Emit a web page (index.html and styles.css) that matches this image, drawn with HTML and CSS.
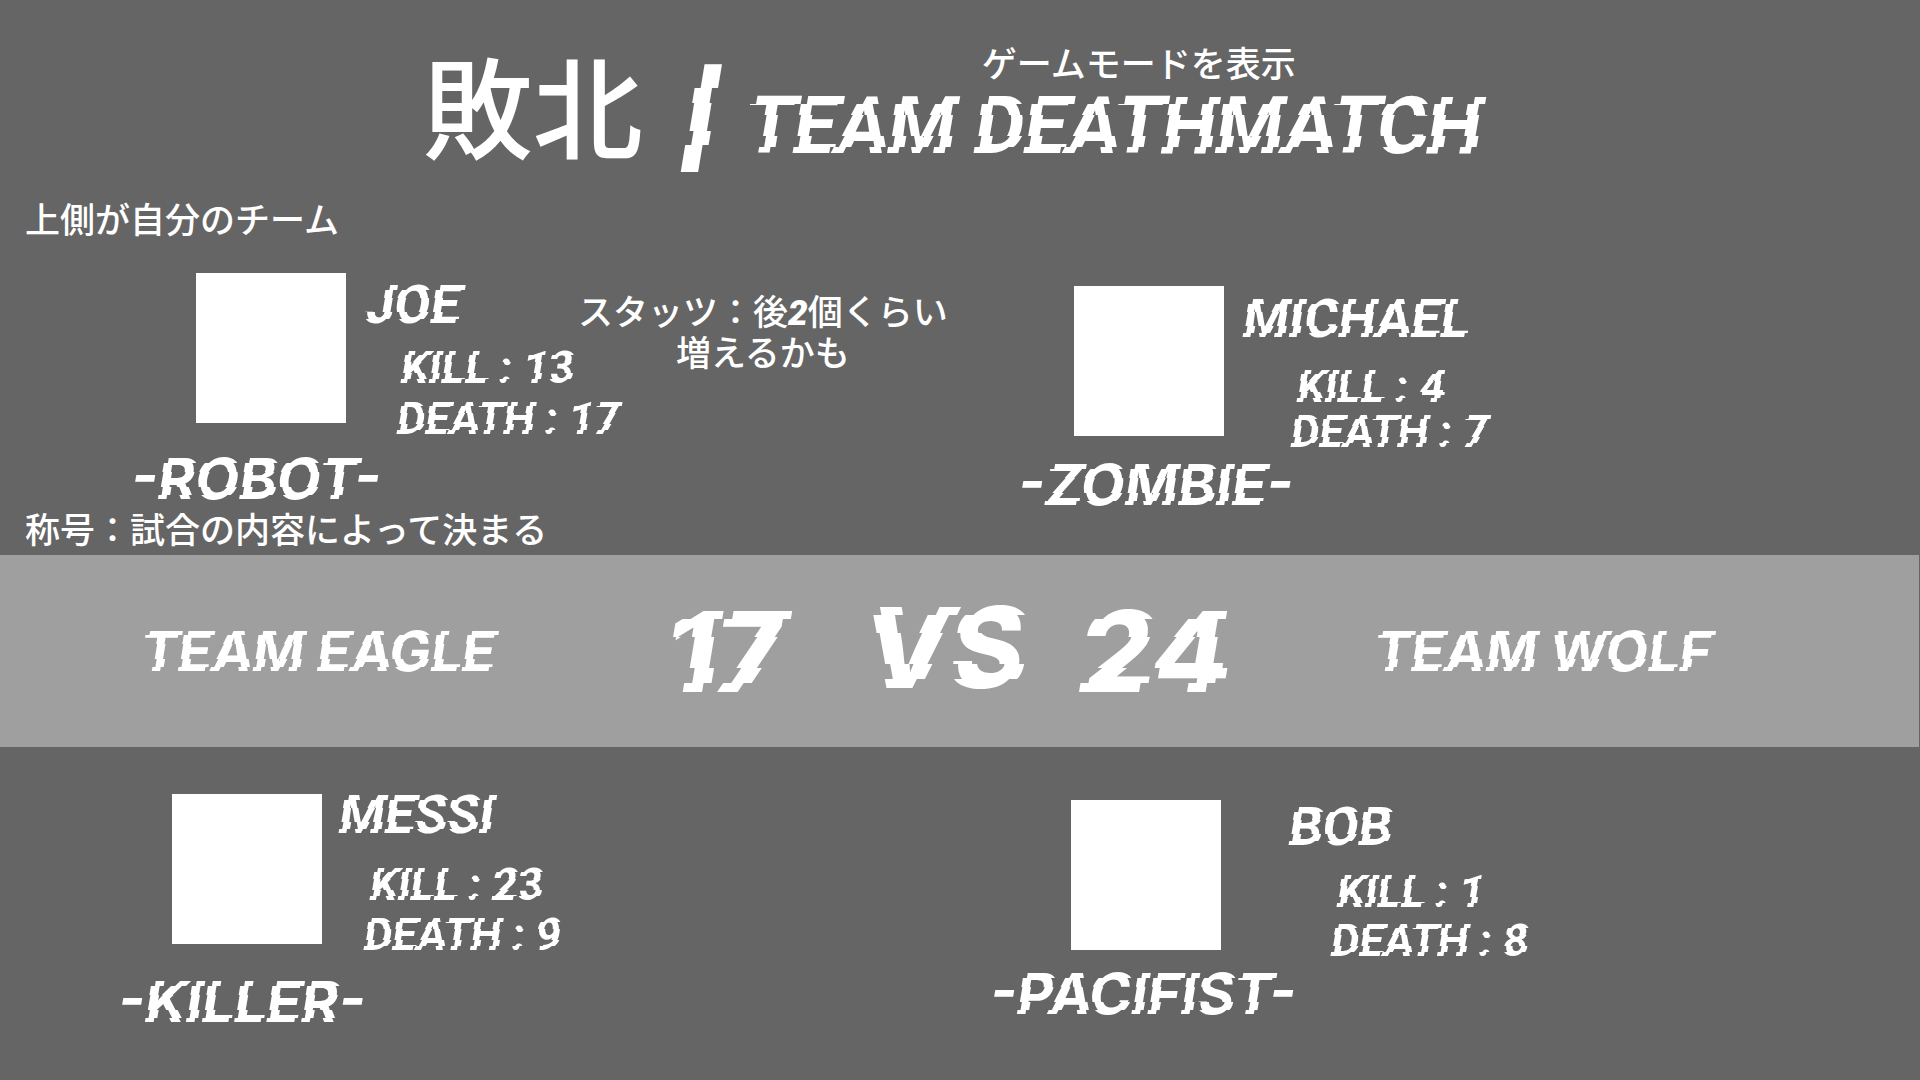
FILE: index.html
```html
<!DOCTYPE html>
<html lang="ja">
<head>
<meta charset="utf-8">
<title>Team Deathmatch</title>
<link rel="stylesheet" href="styles.css">
</head>
<body>
<svg class="defs" width="0" height="0" aria-hidden="true">
  <defs>
    <!-- Each filter cuts the text into five bands and shifts them sideways; one per text size. -->
    <filter id="glitch-title" filterUnits="userSpaceOnUse" primitiveUnits="userSpaceOnUse" x="-20" y="-20" width="1000" height="140" color-interpolation-filters="sRGB">
      <feOffset in="SourceGraphic" dx="4" y="-20" height="38" result="a"/>
      <feOffset in="SourceGraphic" dx="-2" y="18" height="11" result="b"/>
      <feOffset in="SourceGraphic" dx="0" y="29" height="21" result="c"/>
      <feOffset in="SourceGraphic" dx="3" y="50" height="11" result="d"/>
      <feOffset in="SourceGraphic" dx="-2" y="61" height="59" result="e"/>
      <feMerge><feMergeNode in="a"/><feMergeNode in="b"/><feMergeNode in="c"/><feMergeNode in="d"/><feMergeNode in="e"/></feMerge>
    </filter>
    <filter id="glitch-score" filterUnits="userSpaceOnUse" primitiveUnits="userSpaceOnUse" x="-20" y="-20" width="1000" height="180" color-interpolation-filters="sRGB">
      <feOffset in="SourceGraphic" dx="5" y="-20" height="48" result="a"/>
      <feOffset in="SourceGraphic" dx="-3" y="28" height="18" result="b"/>
      <feOffset in="SourceGraphic" dx="0" y="46" height="31" result="c"/>
      <feOffset in="SourceGraphic" dx="5" y="77" height="15" result="d"/>
      <feOffset in="SourceGraphic" dx="-3" y="92" height="68" result="e"/>
      <feMerge><feMergeNode in="a"/><feMergeNode in="b"/><feMergeNode in="c"/><feMergeNode in="d"/><feMergeNode in="e"/></feMerge>
    </filter>
    <filter id="glitch-tag" filterUnits="userSpaceOnUse" primitiveUnits="userSpaceOnUse" x="-20" y="-20" width="1000" height="100" color-interpolation-filters="sRGB">
      <feOffset in="SourceGraphic" dx="3" y="-20" height="33" result="a"/>
      <feOffset in="SourceGraphic" dx="-1" y="13" height="9" result="b"/>
      <feOffset in="SourceGraphic" dx="0" y="22" height="15" result="c"/>
      <feOffset in="SourceGraphic" dx="2" y="37" height="8" result="d"/>
      <feOffset in="SourceGraphic" dx="-1" y="45" height="35" result="e"/>
      <feMerge><feMergeNode in="a"/><feMergeNode in="b"/><feMergeNode in="c"/><feMergeNode in="d"/><feMergeNode in="e"/></feMerge>
    </filter>
    <filter id="glitch-name" filterUnits="userSpaceOnUse" primitiveUnits="userSpaceOnUse" x="-20" y="-20" width="1000" height="100" color-interpolation-filters="sRGB">
      <feOffset in="SourceGraphic" dx="3" y="-20" height="32" result="a"/>
      <feOffset in="SourceGraphic" dx="-1" y="12" height="8" result="b"/>
      <feOffset in="SourceGraphic" dx="0" y="20" height="14" result="c"/>
      <feOffset in="SourceGraphic" dx="2" y="34" height="7" result="d"/>
      <feOffset in="SourceGraphic" dx="-1" y="41" height="39" result="e"/>
      <feMerge><feMergeNode in="a"/><feMergeNode in="b"/><feMergeNode in="c"/><feMergeNode in="d"/><feMergeNode in="e"/></feMerge>
    </filter>
    <filter id="glitch-stat" filterUnits="userSpaceOnUse" primitiveUnits="userSpaceOnUse" x="-20" y="-20" width="1000" height="90" color-interpolation-filters="sRGB">
      <feOffset in="SourceGraphic" dx="2" y="-20" height="30" result="a"/>
      <feOffset in="SourceGraphic" dx="-1" y="10" height="7" result="b"/>
      <feOffset in="SourceGraphic" dx="0" y="17" height="11" result="c"/>
      <feOffset in="SourceGraphic" dx="2" y="28" height="6" result="d"/>
      <feOffset in="SourceGraphic" dx="-1" y="34" height="36" result="e"/>
      <feMerge><feMergeNode in="a"/><feMergeNode in="b"/><feMergeNode in="c"/><feMergeNode in="d"/><feMergeNode in="e"/></feMerge>
    </filter>
    <filter id="glitch-divider" filterUnits="userSpaceOnUse" primitiveUnits="userSpaceOnUse" x="-30" y="-30" width="160" height="170" color-interpolation-filters="sRGB">
      <feOffset in="SourceGraphic" dx="4" y="-30" height="44" result="a"/>
      <feOffset in="SourceGraphic" dx="-2" y="14" height="15" result="b"/>
      <feOffset in="SourceGraphic" dx="0" y="29" height="28" result="c"/>
      <feOffset in="SourceGraphic" dx="4" y="57" height="14" result="d"/>
      <feOffset in="SourceGraphic" dx="-2" y="71" height="69" result="e"/>
      <feMerge><feMergeNode in="a"/><feMergeNode in="b"/><feMergeNode in="c"/><feMergeNode in="d"/><feMergeNode in="e"/></feMerge>
    </filter>
  </defs>
</svg>

<main class="page">
  <header class="header">
    <h1 class="result">敗北</h1>
    <span class="divider">|</span>
    <div class="mode">
      <p class="note mode-note">ゲームモードを表示</p>
      <h2 class="mode-name">TEAM DEATHMATCH</h2>
    </div>
  </header>

  <p class="note side-note">上側が自分のチーム</p>

  <section class="team team-top">
    <div class="slot">
      <article class="player player-joe">
        <div class="portrait"></div>
        <div class="info">
          <h3 class="name">JOE</h3>
          <p class="note stats-note">スタッツ：後<b class="digit">2</b>個くらい<br>増えるかも</p>
          <p class="stat kill">KILL : 13</p>
          <p class="stat death">DEATH : 17</p>
        </div>
        <p class="tag">-ROBOT-</p>
      </article>
      <p class="note side-note-low">称号：試合の内容によって決まる</p>
    </div>
    <div class="slot">
      <article class="player player-michael">
        <div class="portrait"></div>
        <div class="info">
          <h3 class="name">MICHAEL</h3>
          <p class="stat kill">KILL : 4</p>
          <p class="stat death">DEATH : 7</p>
        </div>
        <p class="tag">-ZOMBIE-</p>
      </article>
    </div>
  </section>

  <section class="versus">
    <p class="team-name">TEAM EAGLE</p>
    <p class="score">17</p>
    <p class="score vs">VS</p>
    <p class="score">24</p>
    <p class="team-name">TEAM WOLF</p>
  </section>

  <section class="team team-bottom">
    <div class="slot">
      <article class="player player-messi">
        <div class="portrait"></div>
        <div class="info">
          <h3 class="name">MESSI</h3>
          <p class="stat kill">KILL : 23</p>
          <p class="stat death">DEATH : 9</p>
        </div>
        <p class="tag">-KILLER-</p>
      </article>
    </div>
    <div class="slot">
      <article class="player player-bob">
        <div class="portrait"></div>
        <div class="info">
          <h3 class="name">BOB</h3>
          <p class="stat kill">KILL : 1</p>
          <p class="stat death">DEATH : 8</p>
        </div>
        <p class="tag">-PACIFIST-</p>
      </article>
    </div>
  </section>
</main>
</body>
</html>
```
FILE: styles.css
```css
* {
  box-sizing: border-box;
  margin: 0;
  padding: 0;
}

body {
  background: #656565;
  color: #fff;
  font-family: Roboto, "Noto Sans CJK JP", sans-serif;
}

.defs {
  position: absolute;
}

.page {
  display: flex;
  flex-direction: column;
  min-height: 100vh;
}

.note {
  font: 500 35px/40px "Noto Sans CJK JP", sans-serif;
  white-space: nowrap;
}

.digit {
  font: italic 900 35px/35px Roboto, sans-serif;
}

/* Header */

.header {
  display: flex;
  justify-content: center;
  align-items: center;
  padding: 40px 16px 0 0;
}

.result {
  font: 500 110px/114px "Noto Sans CJK JP", sans-serif;
}

.divider {
  margin: 32px 29px 0 38px;
  font: italic 900 90px/90px Inter, sans-serif;
  filter: url(#glitch-divider);
}

.mode-note {
  padding-left: 50px;
  line-height: 44px;
  text-align: center;
}

.mode-name {
  margin-top: 2px;
  font: italic 700 79px/80px Roboto, sans-serif;
  white-space: nowrap;
  filter: url(#glitch-title);
}

.side-note {
  margin-top: 32px;
  padding-left: 25px;
}

.side-note-low {
  padding-left: 25px;
}

/* Teams */

.team {
  display: grid;
  grid-template-columns: repeat(2, minmax(0, 1fr));
}

.team-top {
  padding: 4px 0 7px;
}

.team-bottom {
  padding-top: 40px;
}

.player {
  display: grid;
  grid-template-columns: auto 1fr;
  align-items: start;
}

.portrait {
  width: 150px;
  height: 150px;
  background: #fff;
}

.name {
  font: italic 700 54px/54px Roboto, sans-serif;
  filter: url(#glitch-name);
}

.stat {
  font: italic 700 45px/45px Roboto, sans-serif;
  white-space: nowrap;
  filter: url(#glitch-stat);
}

.tag {
  grid-column: 1 / -1;
  font: italic 700 57px/58px Inter, sans-serif;
  filter: url(#glitch-tag);
}

.player-joe {
  padding: 31px 0 0 131px;
}

.player-joe .portrait {
  margin-left: 65px;
}

.player-joe .info {
  display: grid;
  grid-template-columns: 213px 1fr;
  justify-items: start;
  padding: 5px 0 0 19px;
}

.player-joe .stats-note {
  grid-area: 1 / 2 / 3 / 3;
  margin-top: 12px;
  line-height: 39px;
  text-align: center;
}

.player-joe .kill {
  grid-area: 2 / 1;
  margin: 13px 0 0 36px;
}

.player-joe .death {
  grid-column: 1 / -1;
  margin: 6px 0 0 32px;
}

.player-joe .tag {
  margin-top: 9px;
}

.player-michael {
  padding: 44px 0 0 58px;
}

.player-michael .portrait {
  margin-left: 56px;
}

.player-michael .info {
  padding: 6px 0 0 19px;
}

.player-michael .kill {
  margin: 18px 0 0 54px;
}

.player-michael .death {
  margin-left: 48px;
}

.player-michael .tag {
  margin-top: 2px;
}

.player-messi {
  padding-left: 118px;
}

.player-messi .portrait {
  margin: 7px 0 0 54px;
}

.player-messi .info {
  padding: 1px 0 0 17px;
}

.player-messi .kill {
  margin: 20px 0 0 31px;
}

.player-messi .death {
  margin: 5px 0 0 25px;
}

.player-messi .tag {
  margin-top: 16px;
}

.player-bob {
  padding: 12px 0 0 30px;
}

.player-bob .portrait {
  margin: 1px 0 0 81px;
}

.player-bob .info {
  padding: 1px 0 0 68px;
}

.player-bob .kill {
  margin: 15px 0 0 48px;
}

.player-bob .death {
  margin: 4px 0 0 42px;
}

.player-bob .tag {
  margin-top: 2px;
}

/* Score band */

.versus {
  display: grid;
  grid-template-columns: 526fr 197fr 217fr 293fr 545fr;
  align-items: center;
  min-height: 192px;
  margin-right: 1px;
  padding-left: 141px;
  background: #9f9f9f;
}

.team-name {
  font: italic 700 55px/58px Inter, sans-serif;
  white-space: nowrap;
  filter: url(#glitch-tag);
}

.score {
  font: italic 800 112px/120px Inter, sans-serif;
  filter: url(#glitch-score);
}

.vs {
  padding-bottom: 8px;
}
```
